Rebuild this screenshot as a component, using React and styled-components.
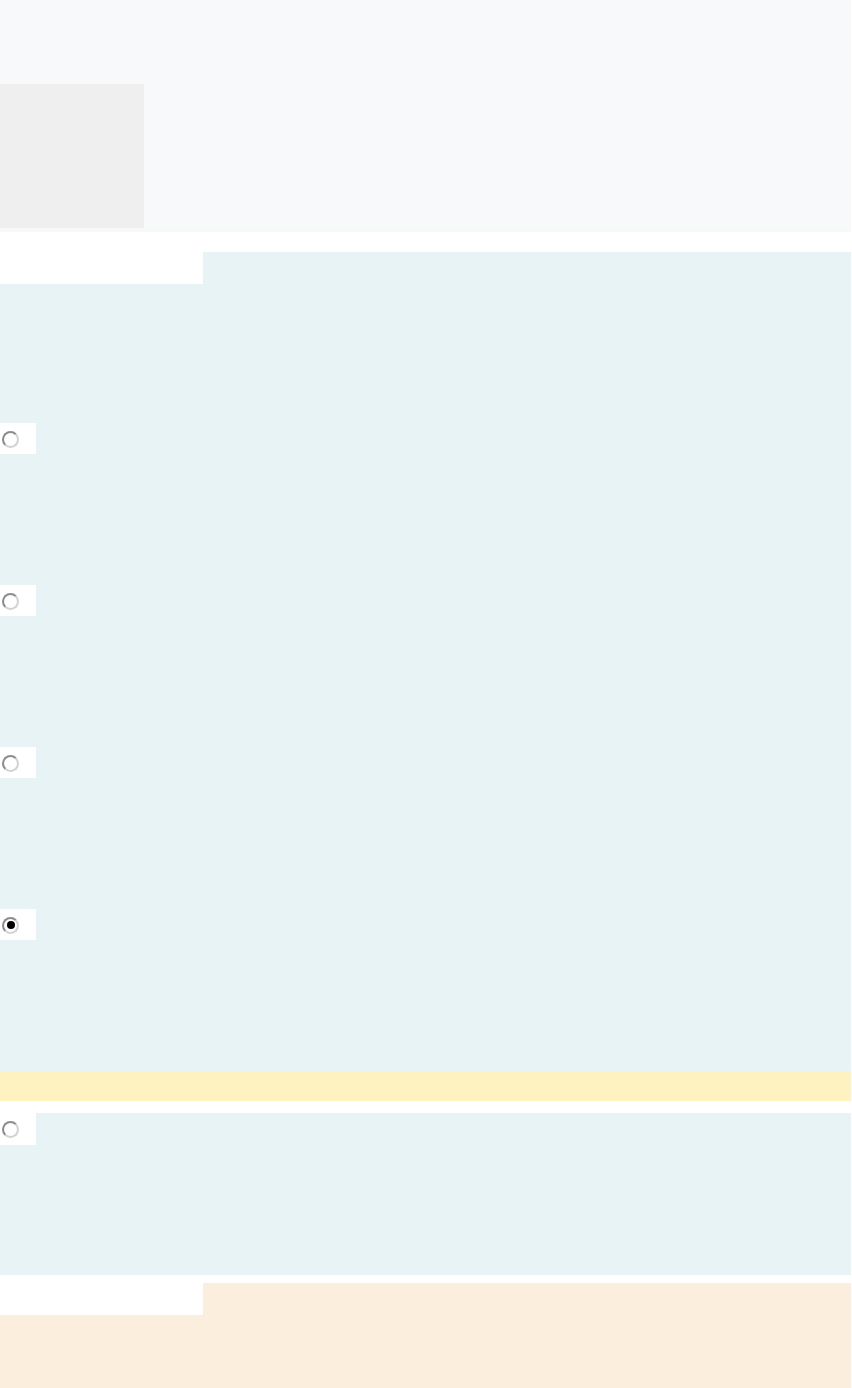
import React from 'react'
import styled, { createGlobalStyle } from 'styled-components'

const GlobalStyle = createGlobalStyle`
  html, body {
    margin: 0;
    padding: 0;
    background: #ffffff;
    font-family: "Liberation Sans", Arial, sans-serif;
  }
`

const options = [false, false, false, true]

const App = () => {
  return (
    <Page>
      <GlobalStyle />
      <Header>
        <Thumb />
      </Header>
      <HeaderEdge />

      <Section $bg="#e7f3f5" $top="20px">
        <Tab />
        <Question />
        {options.map((checked, i) => (
          <Option key={i}>
            <RadioBox>
              <Radio $checked={checked} />
            </RadioBox>
          </Option>
        ))}
      </Section>

      <Notice />

      <Section $bg="#e7f3f5" $top="12px">
        <Option>
          <RadioBox $tall>
            <Radio />
          </RadioBox>
        </Option>
      </Section>

      <Section $bg="#fbeedc" $top="8px" $grow>
        <Tab />
      </Section>
    </Page>
  )
}

////////////////CSS////////////////

const Page = styled.div`
  width: 851px;
  min-height: 1388px;
  display: flex;
  flex-direction: column;
`

//////////Header/////////////

const Header = styled.div`
  height: 144px;
  padding-top: 84px;
  background-color: #f8f9fa;
  display: flex;
`

const Thumb = styled.div`
  width: 144px;
  height: 144px;
  background-color: #efefef;
`

const HeaderEdge = styled.div`
  height: 4px;
  background-color: #f7f8f8;
`

//////////Sections/////////////

const Section = styled.div`
  margin-top: ${p => p.$top};
  background-color: ${p => p.$bg};
  display: flex;
  flex-direction: column;
  flex: ${p => (p.$grow ? 1 : 'none')};
`

const Tab = styled.div`
  width: 203px;
  height: 32px;
  background-color: #ffffff;
`

const Question = styled.div`
  height: 139px;
`

const Option = styled.div`
  height: 162px;
`

const RadioBox = styled.div`
  width: 36px;
  height: ${p => (p.$tall ? '32px' : '31px')};
  background-color: #ffffff;
  display: flex;
  align-items: center;
  padding-left: 2px;
  box-sizing: border-box;
`

const Radio = styled.span`
  position: relative;
  width: 17px;
  height: 17px;
  border-radius: 50%;
  box-sizing: border-box;
  border: 2px solid #8c8c8c;
  border-right-color: #d2d2d2;
  border-bottom-color: #d2d2d2;
  background: #ffffff;
  margin-top: 1px;
  &::after {
    content: '';
    display: ${p => (p.$checked ? 'block' : 'none')};
    position: absolute;
    left: 2.5px;
    top: 2.5px;
    width: 8px;
    height: 8px;
    border-radius: 50%;
    background: #000000;
  }
`

const Notice = styled.div`
  height: 30px;
  background-color: #fff2c1;
`

export default App
